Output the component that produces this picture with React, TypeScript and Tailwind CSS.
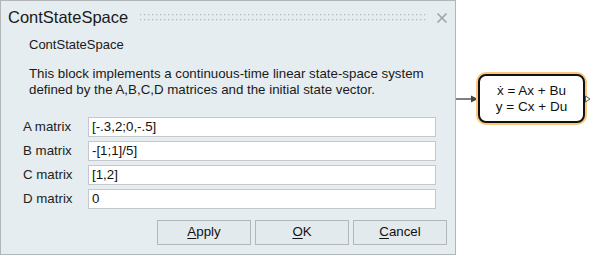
import React from "react";

const font = { fontFamily: '"Liberation Sans", Arial, sans-serif' };

function Row({ label, value }: { label: string; value: string }) {
  return (
    <div className="flex items-center h-[24px]">
      <div className="w-[65px] text-[13.3px] text-[#222]">{label}</div>
      <div className="w-[348px] h-[20px] bg-white border border-[#c4c8ca] flex items-center px-[3px] text-[13.3px] text-[#111]">
        {value}
      </div>
    </div>
  );
}

function Btn({ u, rest }: { u: string; rest: string }) {
  return (
    <div className="w-[94px] h-[25px] border border-[#b3b7b9] bg-[#e3eaed] flex items-center justify-center text-[13.3px] text-[#111]">
      <span className="underline underline-offset-2">{u}</span>
      {rest}
    </div>
  );
}

export default function App() {
  return (
    <div className="w-[596px] h-[256px] bg-white flex items-start" style={font}>
      <div className="w-[456px] h-[255px] bg-[#e5edf0] border border-[#b2b5b7] flex flex-col">
        <div className="flex items-center h-[33px] pl-[7px] pr-[7px]">
          <div className="text-[16.5px] text-[#1a1a1a]">ContStateSpace</div>
          <svg className="ml-[12px] flex-1 h-[10px]" height="10">
            <defs>
              <pattern id="dots" width="4" height="5" patternUnits="userSpaceOnUse">
                <rect x="0" y="1" width="1.3" height="1.3" fill="#b5b9bb" />
              </pattern>
            </defs>
            <rect width="100%" height="10" fill="url(#dots)" />
          </svg>
          <svg width="12" height="12" viewBox="0 0 12 12" className="ml-[8px]">
            <path d="M1.5 1.5 L10.5 10.5 M10.5 1.5 L1.5 10.5" stroke="#9ea3a6" strokeWidth="1.6" />
          </svg>
        </div>
        <div className="pl-[28px] text-[13px] text-[#1a1a1a] mt-[1px]">ContStateSpace</div>
        <div className="pl-[28px] text-[13.3px] text-[#1a1a1a] mt-[11px] leading-[16px]">
          <div>This block implements a continuous-time linear state-space system</div>
          <div>defined by the A,B,C,D matrices and the initial state vector.</div>
        </div>
        <div className="pl-[22px] mt-[17px] flex flex-col">
          <Row label="A matrix" value="[-.3,2;0,-.5]" />
          <Row label="B matrix" value="-[1;1]/5]" />
          <Row label="C matrix" value="[1,2]" />
          <Row label="D matrix" value="0" />
        </div>
        <div className="flex justify-end gap-[4px] pr-[8px] mt-[9px]">
          <Btn u="A" rest="pply" />
          <Btn u="O" rest="K" />
          <Btn u="C" rest="ancel" />
        </div>
      </div>
      <div className="flex items-center mt-[74px]">
        <svg width="22" height="10" viewBox="0 0 22 10">
          <line x1="0" y1="5" x2="16" y2="5" stroke="#555" strokeWidth="1.5" />
          <path d="M15 1.5 L22 5 L15 8.5 Z" fill="#444" />
        </svg>
        <div className="w-[107px] h-[49px] rounded-[8px] border-2 border-[#111] bg-white shadow-[0_0_0_2px_#f9c87d] flex flex-col items-center justify-center text-[13.5px] text-[#111] leading-[16px]">
          <div>ẋ = Ax + Bu</div>
          <div>y = Cx + Du</div>
        </div>
        <svg width="6" height="8" viewBox="0 0 6 8">
          <path d="M0.5 1 L5 4 L0.5 7 Z" fill="white" stroke="#555" strokeWidth="1" />
        </svg>
      </div>
    </div>
  );
}
